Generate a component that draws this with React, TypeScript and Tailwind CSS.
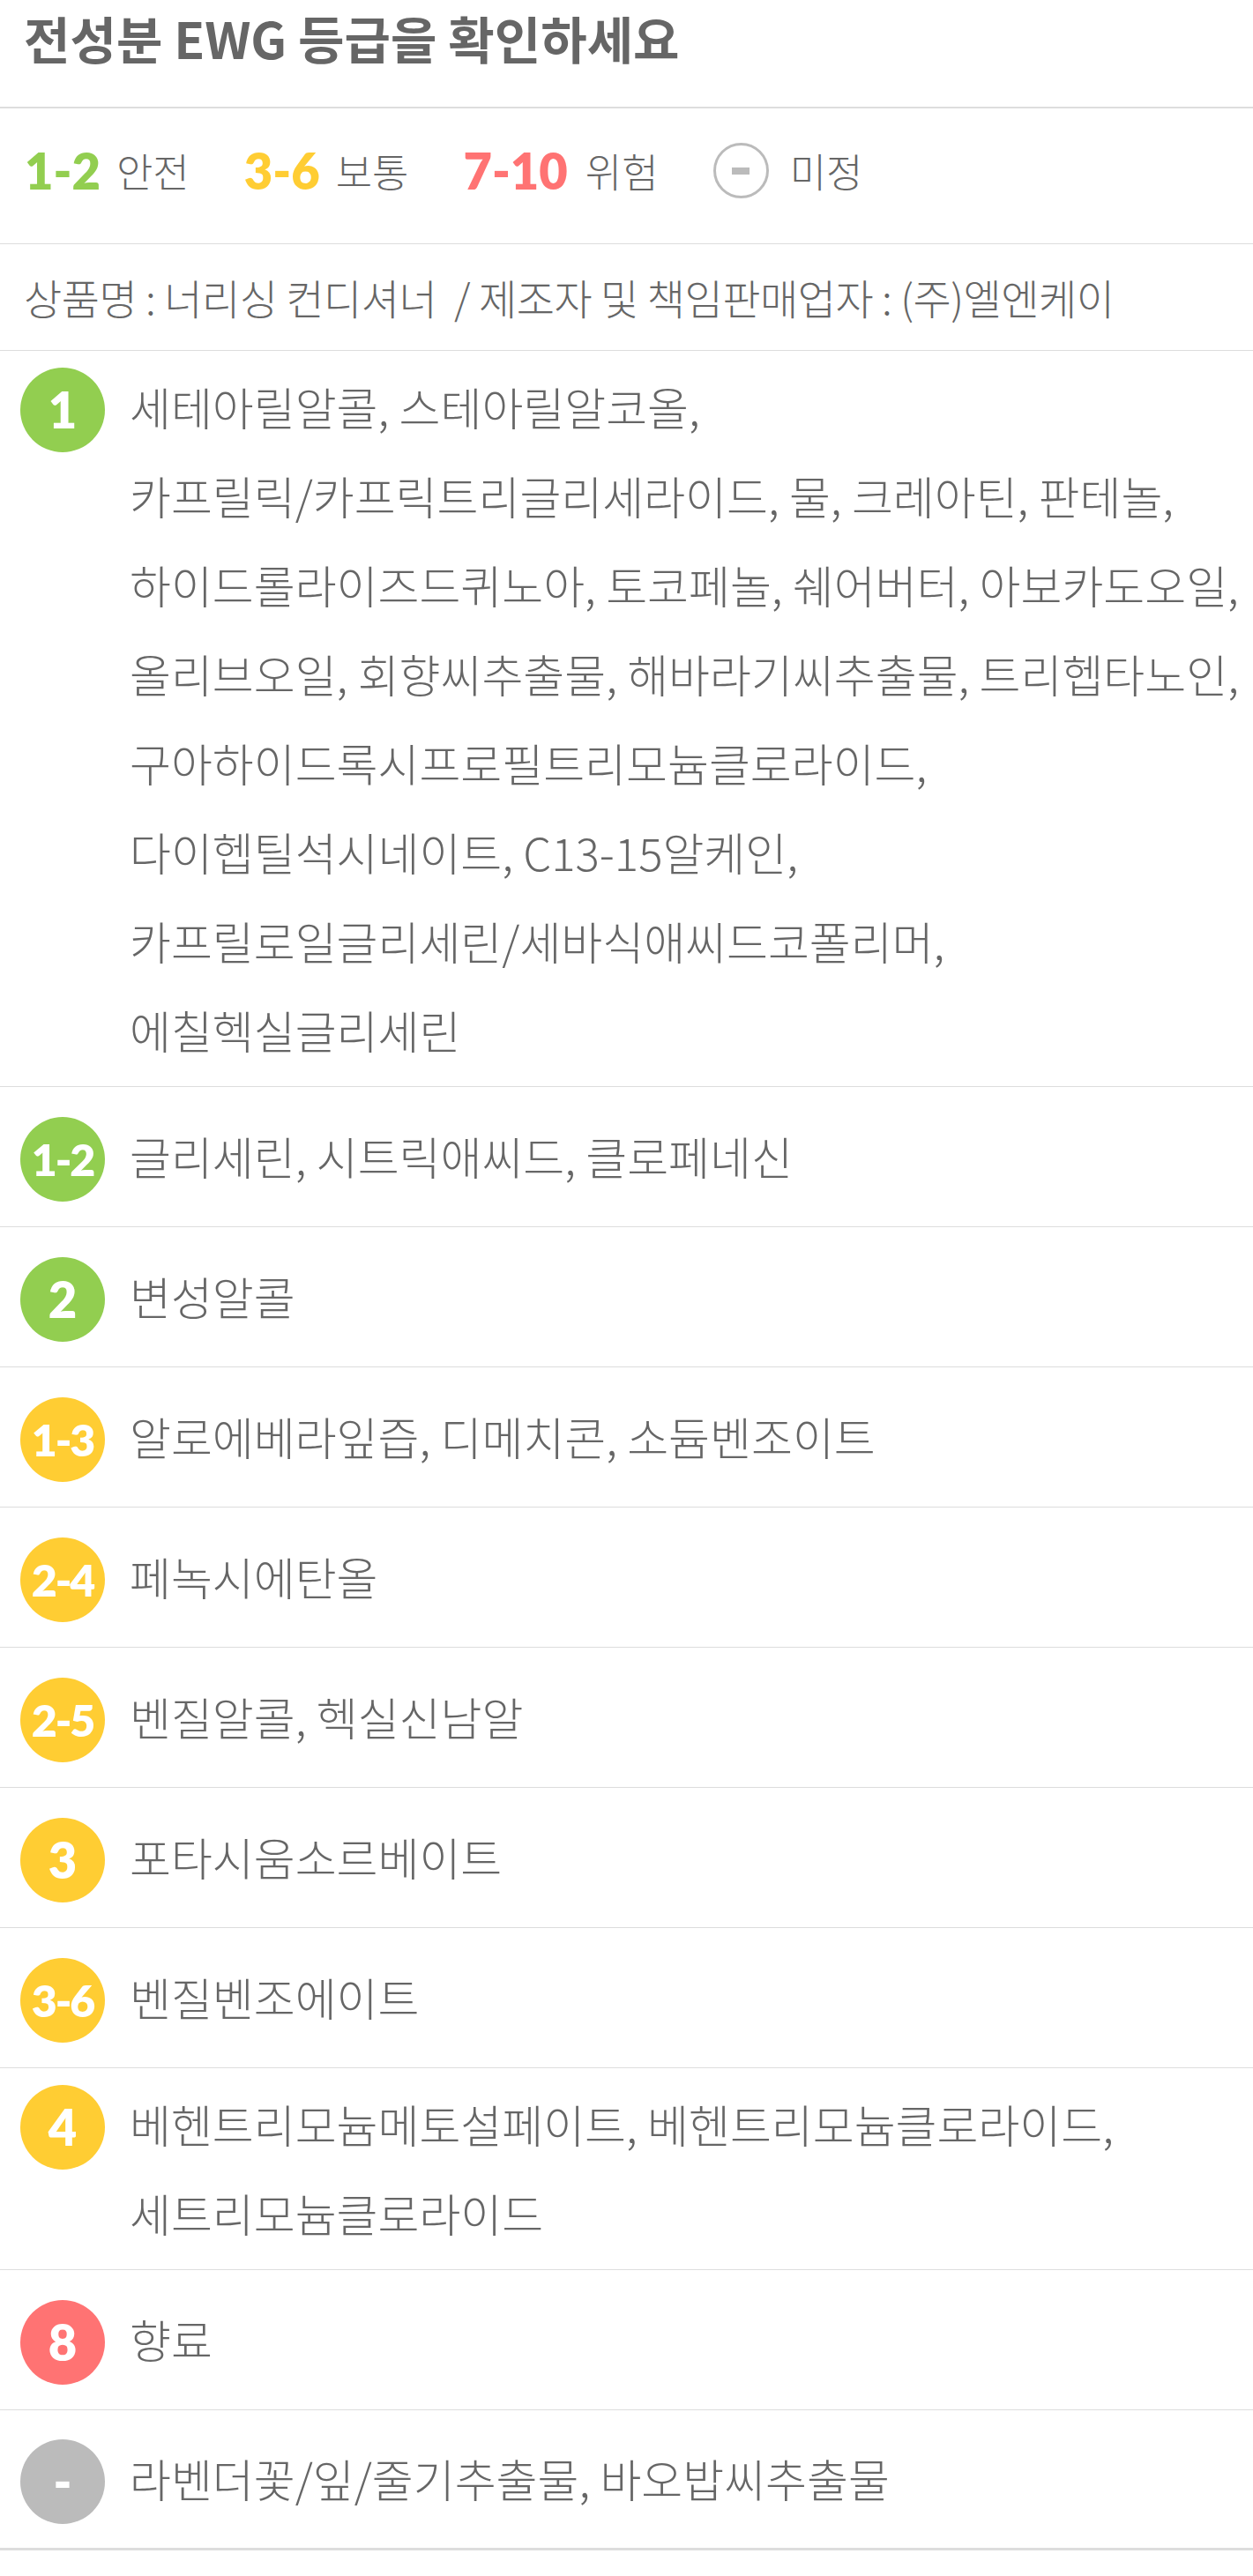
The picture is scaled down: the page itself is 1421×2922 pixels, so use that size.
import { Fragment } from 'react'

type Grade = 'safe' | 'normal' | 'danger' | 'unknown'

const badgeColor: Record<Grade, string> = {
  safe: 'bg-[#92ce50]',
  normal: 'bg-[#ffcd33]',
  danger: 'bg-[#ff7373]',
  unknown: 'bg-[#bbbbbb]',
}

const rows: { score: string; grade: Grade; text: string }[] = [
  {
    score: '1',
    grade: 'safe',
    text: '세테아릴알콜, 스테아릴알코올, 카프릴릭/카프릭트리글리세라이드, 물, 크레아틴, 판테놀, 하이드롤라이즈드퀴노아, 토코페놀, 쉐어버터, 아보카도오일, 올리브오일, 회향씨추출물, 해바라기씨추출물, 트리헵타노인, 구아하이드록시프로필트리모늄클로라이드, 다이헵틸석시네이트, C13-15알케인, 카프릴로일글리세린/세바식애씨드코폴리머, 에칠헥실글리세린',
  },
  { score: '1-2', grade: 'safe', text: '글리세린, 시트릭애씨드, 클로페네신' },
  { score: '2', grade: 'safe', text: '변성알콜' },
  { score: '1-3', grade: 'normal', text: '알로에베라잎즙, 디메치콘, 소듐벤조이트' },
  { score: '2-4', grade: 'normal', text: '페녹시에탄올' },
  { score: '2-5', grade: 'normal', text: '벤질알콜, 헥실신남알' },
  { score: '3', grade: 'normal', text: '포타시움소르베이트' },
  { score: '3-6', grade: 'normal', text: '벤질벤조에이트' },
  {
    score: '4',
    grade: 'normal',
    text: '베헨트리모늄메토설페이트, 베헨트리모늄클로라이드, 세트리모늄클로라이드',
  },
  { score: '8', grade: 'danger', text: '향료' },
  { score: '-', grade: 'unknown', text: '라벤더꽃/잎/줄기추출물, 바오밥씨추출물' },
]

function Badge({ score, grade }: { score: string; grade: Grade }) {
  const isRange = score.length > 1
  return (
    <div
      className={`mt-[6px] flex h-[96px] w-[96px] shrink-0 items-center justify-center rounded-full text-white font-['Lato',sans-serif] font-extrabold ${
        badgeColor[grade]
      } ${isRange ? 'text-[50px] tracking-[-2px]' : 'text-[56px]'}`}
    >
      {score}
    </div>
  )
}

export default function App() {
  return (
    <div className="min-h-screen w-full bg-white text-[#666] font-['Noto_Sans_CJK_KR','Noto_Sans',sans-serif]">
      <h2 className="h-[123px] border-b-2 border-[#dddddd] px-[27px] pt-[14px] text-[57px] font-bold leading-[57px]">
        전성분 EWG 등급을 확인하세요
      </h2>

      <div className="flex h-[154px] items-center gap-[62px] border-b border-[#dddddd] px-[28px] pb-[12px]">
        <div className="flex items-center gap-[18px]">
          <span className="font-['Lato',sans-serif] text-[56px] font-extrabold text-[#92ce50]">1-2</span>
          <span className="text-[45px] font-light">안전</span>
        </div>
        <div className="flex items-center gap-[18px]">
          <span className="font-['Lato',sans-serif] text-[56px] font-extrabold text-[#ffcd33]">3-6</span>
          <span className="text-[45px] font-light">보통</span>
        </div>
        <div className="flex items-center gap-[20px]">
          <span className="font-['Lato',sans-serif] text-[56px] font-extrabold text-[#ff7373]">7-10</span>
          <span className="text-[45px] font-light">위험</span>
        </div>
        <div className="flex items-center gap-[24px]">
          <span className="flex h-[63px] w-[63px] items-center justify-center rounded-full border-[3px] border-[#bbbbbb]">
            <span className="block h-[8px] w-[20px] bg-[#bbbbbb]" />
          </span>
          <span className="text-[45px] font-light">미정</span>
        </div>
      </div>

      <div className="flex h-[121px] items-center border-b border-[#dddddd] px-[27px] text-[47px] font-light tracking-[-0.5px]">
        상품명 : 너리싱 컨디셔너 &nbsp;/ 제조자 및 책임판매업자 : (주)엘엔케이
      </div>

      <ul>
        {rows.map((row) => (
          <li
            key={row.score}
            className="flex min-h-[159px] items-center border-b border-[#dddddd] py-[13px] pl-[23px] last:border-b-[3px]"
          >
            <div className="flex w-full items-start gap-[28px]">
              <Badge score={row.score} grade={row.grade} />
              <p className="min-w-0 flex-1 text-[51px] font-light leading-[101px]">
                {row.text.split(' ').map((word, i) => (
                  <Fragment key={i}>
                    {i > 0 && ' '}
                    <span className="whitespace-nowrap">{word}</span>
                  </Fragment>
                ))}
              </p>
            </div>
          </li>
        ))}
      </ul>
    </div>
  )
}
